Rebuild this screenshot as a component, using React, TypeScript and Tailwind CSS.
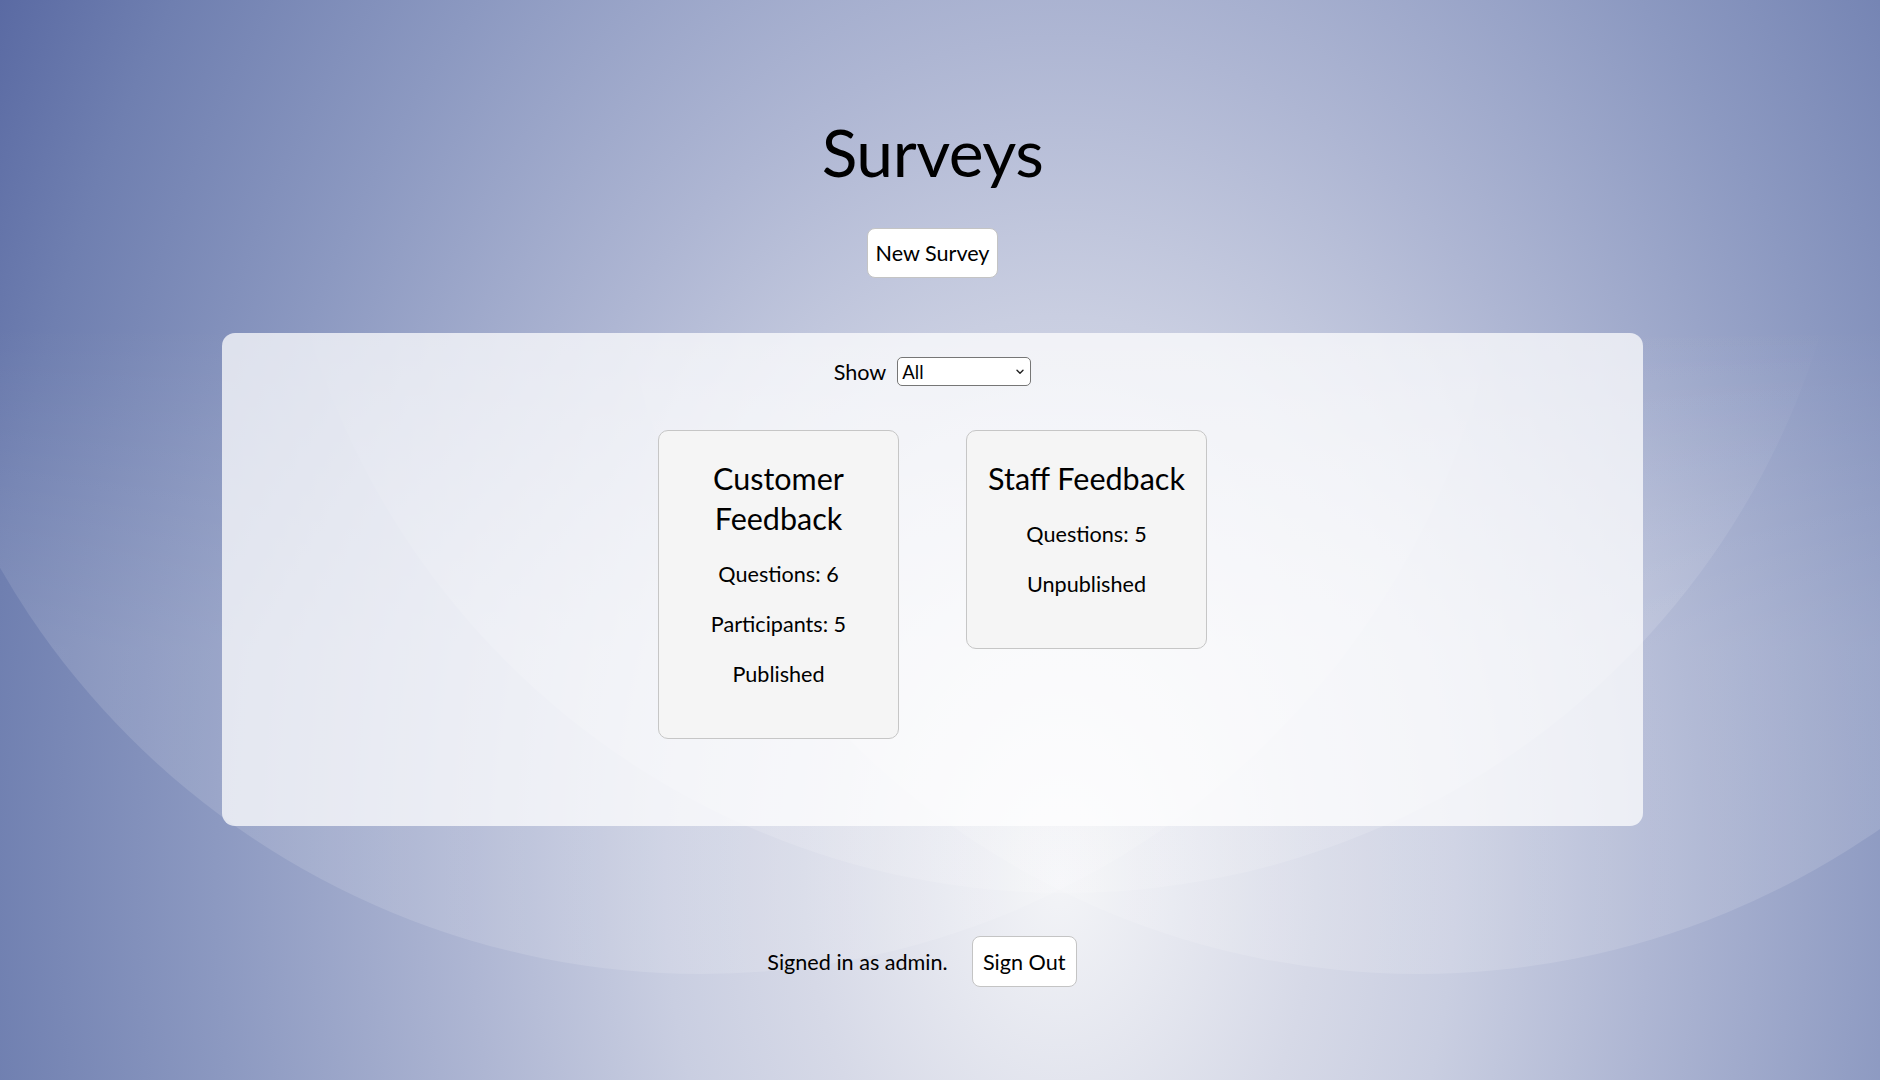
import React from "react";

function SurveyCard({ title, lines }: { title: string; lines: string[] }) {
  return (
    <div className="w-[241px] rounded-[10px] border border-[#c6c6c6] bg-[#f5f5f5] px-4 pt-[27px] pb-[50px] text-center">
      <div className="flex flex-col gap-[22px]">
        <h2 className="text-[30.5px] leading-[40px] font-normal text-black">{title}</h2>
        {lines.map((l) => (
          <p key={l} className="text-[21.6px] leading-[28px] text-black">
            {l}
          </p>
        ))}
      </div>
    </div>
  );
}

function Backdrop() {
  return (
    <svg
      className="pointer-events-none absolute left-0 top-0"
      width="1880"
      height="1080"
      viewBox="0 0 1880 1080"
    >
      <defs>
        <linearGradient id="fade" x1="0" y1="0" x2="0" y2="1080" gradientUnits="userSpaceOnUse">
          <stop offset="0.3" stopColor="#ffffff" stopOpacity="0" />
          <stop offset="0.6" stopColor="#ffffff" stopOpacity="0.13" />
          <stop offset="1" stopColor="#ffffff" stopOpacity="0.13" />
        </linearGradient>
      </defs>
      <circle cx="701" cy="166" r="808" fill="url(#fade)" />
      <circle cx="1418" cy="166" r="808" fill="url(#fade)" />
      <circle cx="1065" cy="103" r="790" fill="url(#fade)" />
    </svg>
  );
}

export default function App() {
  return (
    <div className="relative min-h-screen w-full overflow-hidden font-[Lato,sans-serif] text-black bg-[radial-gradient(ellipse_1000px_1428px_at_1060px_880px,#f3f4f7_0px,#d6d9e7_256px,#c9cee1_395px,#aeb6d3_590px,#8c99c1_844px,#6f7fb0_1079px,#5a6aa3_1226px,#46569a_1400px)]">
      <Backdrop />
      <div className="relative flex flex-col items-center pt-[112px] pr-[15px]">
        <h1 className="text-[66px] leading-[80px] font-normal tracking-[-0.5px]">Surveys</h1>

        <button className="mt-[36px] flex h-[50px] w-[131px] items-center justify-center rounded-[8px] border border-[#c4c4c4] bg-white text-[21.6px] leading-[28px] text-black">
          New Survey
        </button>

        <div className="mt-[55px] w-[1421px] rounded-[13px] bg-white/[0.73] pt-[24px] pb-[87px]">
          <div className="flex h-[29px] items-center justify-center gap-[11px]">
            <span className="text-[21.6px] leading-[28px]">Show</span>
            <div className="relative h-[29px] w-[134px]">
              <select
                defaultValue="All"
                className="h-[29px] w-[134px] appearance-none rounded-[5px] border border-[#767676] bg-white pl-[4px] text-[18.5px] leading-[22px] font-[Lato,sans-serif] text-black outline-none"
              >
                <option>All</option>
                <option>Published</option>
                <option>Unpublished</option>
              </select>
              <svg
                className="pointer-events-none absolute right-[7px] top-[12px]"
                width="8"
                height="6"
                viewBox="0 0 8 6"
                fill="none"
              >
                <path d="M1 1.2l3 3 3-3" stroke="#222" strokeWidth="1.4" strokeLinecap="round" strokeLinejoin="round" />
              </svg>
            </div>
          </div>

          <div className="mt-[44px] flex items-start justify-center gap-[67px]">
            <SurveyCard title="Customer Feedback" lines={["Questions: 6", "Participants: 5", "Published"]} />
            <SurveyCard title="Staff Feedback" lines={["Questions: 5", "Unpublished"]} />
          </div>
        </div>

        <div className="mt-[110px] flex items-center gap-[24px] pr-[21px]">
          <span className="text-[21.6px] leading-[28px]">Signed in as admin.</span>
          <button className="flex h-[51px] w-[105px] items-center justify-center rounded-[8px] border border-[#c4c4c4] bg-white text-[21.6px] leading-[28px] text-black">
            Sign Out
          </button>
        </div>
        <div className="h-[93px]" />
      </div>
    </div>
  );
}
